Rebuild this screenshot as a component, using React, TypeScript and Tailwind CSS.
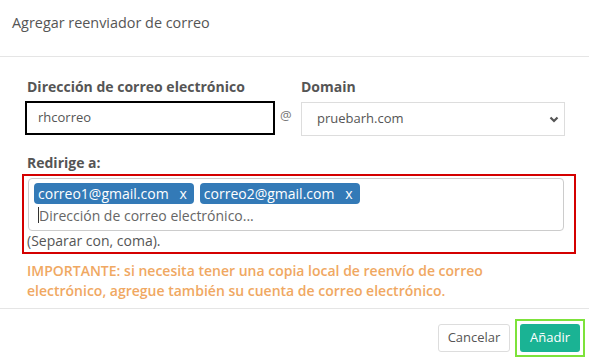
import React from "react";

export default function App() {
  const font = { fontFamily: '"Open Sans", "Liberation Sans", sans-serif' };
  return (
    <div className="w-[589px] h-[360px] bg-white text-[#555] overflow-hidden" style={font}>
      <div className="h-[57px] border-b border-[#e5e5e5] px-[12px] pt-[13px]">
        <div className="text-[14.4px] leading-[20px] text-[#555]">Agregar reenviador de correo</div>
      </div>
      <div className="pt-[20px] pl-[25px] pr-[24px]">
        <div className="flex items-start">
          <div className="w-[250px] shrink-0">
            <div className="text-[14px] font-bold leading-[20px] mb-[4px] ml-[2px]">Dirección de correo electrónico</div>
            <div className="h-[34px] border-2 border-black flex items-center px-[11px] text-[13px] text-[#555]">rhcorreo</div>
          </div>
          <div className="w-[26px] shrink-0 pt-[29px] text-[13px] text-[#777] pl-[5px]">@</div>
          <div className="w-[264px] shrink-0">
            <div className="text-[14px] font-bold leading-[20px] mb-[5px]">Domain</div>
            <div className="h-[34px] border border-[#ddd] flex items-center justify-between pl-[15px] pr-[5px] text-[13px] text-[#555]">
              <span>pruebarh.com</span>
              <svg width="10" height="7" viewBox="0 0 10 7"><path d="M1.5 1.5 L5 5 L8.5 1.5" stroke="#555" strokeWidth="2.2" fill="none" /></svg>
            </div>
          </div>
        </div>
        <div className="text-[14px] font-bold leading-[20px] mt-[17px] ml-[2px]">Redirige a:</div>
        <div className="mt-[1px] -ml-[3px] w-[554px] h-[80px] border-2 border-[#d40000] pl-[4px] pr-[10px] pt-[2px]">
          <div className="h-[53px] border border-[#ccc] rounded-[4px] px-[5px] pt-[4px]">
            <div className="flex gap-[6px]">
              <span className="h-[21px] bg-[#337ab7] text-white rounded-[4px] text-[14px] leading-[21px] pl-[4px] pr-[7px]">correo1@gmail.com&nbsp;&nbsp;&nbsp;x</span>
              <span className="h-[21px] bg-[#337ab7] text-white rounded-[4px] text-[14px] leading-[21px] pl-[4px] pr-[7px]">correo2@gmail.com&nbsp;&nbsp;&nbsp;x</span>
            </div>
            <div className="flex items-center h-[22px] pl-[4px] text-[14px] text-[#666]">
              <span className="w-px h-[16px] bg-[#333]"></span>
              <span>Dirección de correo electrónico...</span>
            </div>
          </div>
          <div className="text-[14px] leading-[20px] text-[#555] mt-[0px] -ml-[1px]">(Separar con, coma).</div>
        </div>
      </div>
      <div className="pl-[27px] w-[520px] mt-[7px] text-[14px] font-semibold leading-[20px] text-[#f0a862] h-[47px]">
        IMPORTANTE: si necesita tener una copia local de reenvío de correo electrónico, agregue también su cuenta de correo electrónico.
      </div>
      <div className="border-t border-[#e5e5e5] flex justify-end items-center gap-[5px] pr-[4px] pt-[10px]">
        <button className="h-[28px] w-[72px] border border-[#ddd] rounded-[3px] bg-white text-[13px] text-[#555]">Cancelar</button>
        <div className="border-2 border-[#7de23a] p-[3px]">
          <button className="h-[28px] w-[60px] rounded-[3px] bg-[#1ab394] text-white text-[13px]">Añadir</button>
        </div>
      </div>
    </div>
  );
}
